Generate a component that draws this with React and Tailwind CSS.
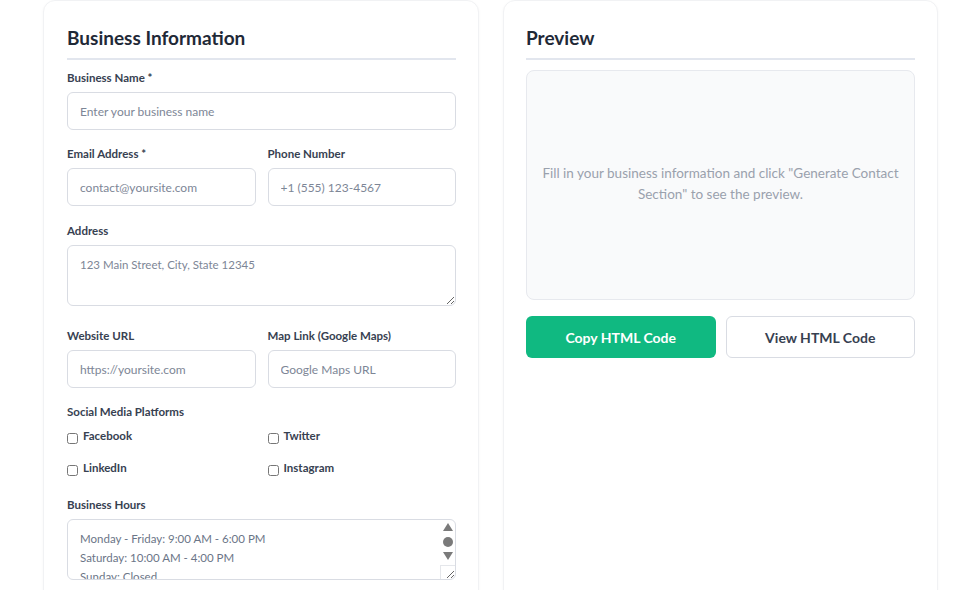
import { useState } from 'react';

const font = { fontFamily: 'Lato, "Noto Sans", sans-serif' };

const hoursText = 'Monday - Friday: 9:00 AM - 6:00 PM\nSaturday: 10:00 AM - 4:00 PM\nSunday: Closed\n';

function Label({ children }) {
    return <label className="block text-[11.5px] font-bold text-[#374151] leading-[20px] mb-1 pt-[1px]">{children}</label>;
}

function Field({ label, placeholder }) {
    return (
        <div>
            <Label>{label}</Label>
            <input
                placeholder={placeholder}
                className="w-full h-[38px] px-3 rounded-md border border-[#d9dce3] text-[12px] text-[#374151] placeholder:text-[#7d8696] outline-none"
            />
        </div>
    );
}

export default function App() {
    const [social, setSocial] = useState({});

    const toggle = (name) => setSocial((s) => ({ ...s, [name]: !s[name] }));

    return (
        <div className="min-h-screen bg-white overflow-hidden" style={font}>
            <div className="grid grid-cols-[436px_435px] gap-[24px] pl-[43px]">
                {/* Form */}
                <div className="rounded-xl border border-[#f1f2f4] bg-white pl-[23px] pr-[22px] pt-[23px] pb-6 shadow-[0_1px_3px_rgba(0,0,0,0.04)]">
                    <h2 className="text-[19px] font-bold text-[#1f2937] leading-[28px] pb-[6px] border-b-2 border-[#e2e6ee]">
                        Business Information
                    </h2>

                    <div className="mt-[7px] mb-[13px]">
                        <Field label="Business Name *" placeholder="Enter your business name" />
                    </div>

                    <div className="grid grid-cols-2 gap-3 mb-[14px]">
                        <Field label="Email Address *" placeholder="contact@yoursite.com" />
                        <Field label="Phone Number" placeholder="+1 (555) 123-4567" />
                    </div>

                    <div>
                        <Label>Address</Label>
                        <textarea
                            placeholder="123 Main Street, City, State 12345"
                            className="w-full h-[61px] px-3 py-[9px] rounded-md border border-[#d9dce3] text-[11.5px] leading-[19px] placeholder:text-[#7d8696] outline-none align-bottom"
                        />
                    </div>

                    <div className="grid grid-cols-2 gap-3 mb-[13px] mt-[19px]">
                        <Field label="Website URL" placeholder="https://yoursite.com" />
                        <Field label="Map Link (Google Maps)" placeholder="Google Maps URL" />
                    </div>

                    <div>
                        <Label>Social Media Platforms</Label>
                        <div className="grid grid-cols-2 gap-x-3 gap-y-[12px] mt-[5px]">
                            {['Facebook', 'Twitter', 'LinkedIn', 'Instagram'].map((name) => (
                                <label key={name} className="flex items-center gap-[5px] h-[20px] cursor-pointer">
                                    <input
                                        type="checkbox"
                                        checked={!!social[name]}
                                        onChange={() => toggle(name)}
                                        className="w-[11px] h-[11px] m-0 mt-[3px]"
                                    />
                                    <span className="text-[11.5px] font-bold text-[#374151] -mt-[2px]">{name}</span>
                                </label>
                            ))}
                        </div>
                    </div>

                    <div className="mt-[15px]">
                        <Label>Business Hours</Label>
                        <div className="relative">
                            <textarea
                                defaultValue={hoursText}
                                className="block w-full h-[61px] pl-3 pr-5 py-[9px] rounded-md border border-[#d9dce3] text-[11.5px] leading-[19px] text-[#6b7587] outline-none overflow-hidden"
                            />
                            {/* scrollbar */}
                            <div className="absolute right-[1px] top-[1px] w-[14px] flex flex-col items-center pt-[3px] pointer-events-none">
                                <svg width="10" height="8" viewBox="0 0 10 8"><path d="M5 0 L10 8 L0 8 Z" fill="#7a7a7a" /></svg>
                                <span className="mt-[6px] w-[10px] h-[10px] rounded-full bg-[#7a7a7a]" />
                                <svg className="mt-[5px]" width="10" height="8" viewBox="0 0 10 8"><path d="M0 0 L10 0 L5 8 Z" fill="#7a7a7a" /></svg>
                            </div>
                            <div className="absolute right-[1px] bottom-[1px] w-[15px] h-[14px] border-l border-t border-[#e5e7eb] pointer-events-none" />
                        </div>
                    </div>
                </div>

                {/* Preview */}
                <div className="rounded-xl border border-[#f1f2f4] bg-white px-[22px] pt-[23px] pb-6 shadow-[0_1px_3px_rgba(0,0,0,0.04)] min-h-[620px]">
                    <h2 className="text-[19px] font-bold text-[#1f2937] leading-[28px] pb-[6px] border-b-2 border-[#e2e6ee]">
                        Preview
                    </h2>

                    <div className="mt-[10px] h-[230px] rounded-lg border border-[#e7e9ee] bg-[#f9fafb] flex items-center justify-center px-[12px]">
                        <p className="text-center text-[13.5px] leading-[21px] text-[#9aa1ad] -mt-[2px]">
                            Fill in your business information and click "Generate Contact Section" to see the preview.
                        </p>
                    </div>

                    <div className="grid grid-cols-2 gap-[10px] mt-4">
                        <button className="h-[42px] rounded-md bg-[#10b981] text-white text-[14px] font-bold">
                            Copy HTML Code
                        </button>
                        <button className="h-[42px] rounded-md border border-[#d9dce3] bg-white text-[#374151] text-[14px] font-bold">
                            View HTML Code
                        </button>
                    </div>
                </div>
            </div>
        </div>
    );
}
